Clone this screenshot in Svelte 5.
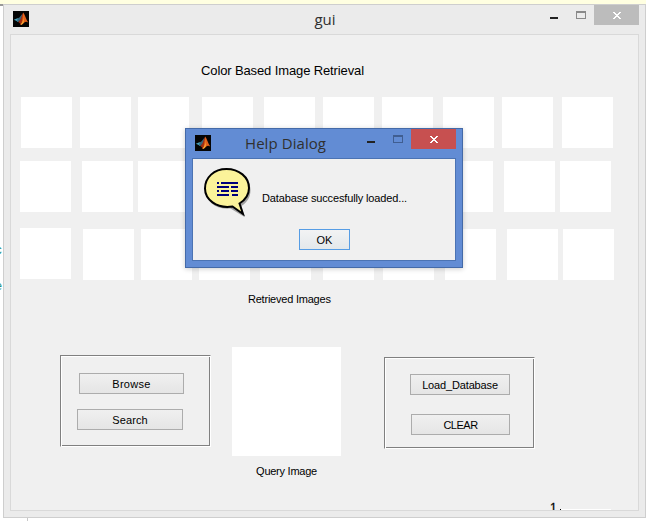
<script>
  const toGaps = (xs, start) => xs.map((x, i) => x - (i ? xs[i - 1] + 51 : start));
  const rows = [
    { xs: [21, 80, 138, 202, 264, 323, 382, 443, 502, 562] },
    { xs: [20, 82, 138, 199, 260, 321, 382, 442, 504, 560] },
    { xs: [20, 83, 141, 199, 260, 323, 383, 445, 507, 563] }
  ].map((r) => toGaps(r.xs, 11));
</script>

{#snippet logo()}
  <svg class="logo" width="16" height="16" viewBox="0 0 16 16">
    <rect width="16" height="16" fill="#050505" />
    <path d="M.8 8.800 4.500 7.300l2.700.7L5 11 3.200 9.800z" fill="#4aa3bd" />
    <path d="M5 7.200c2-.6 3-2.700 4.500-4.600L8.600 8 5.200 11 4 9.200z" fill="#35667c" />
    <path d="M5.200 11C8 9.500 8.400 5 10.200 1.600L9.800 9 7.500 13.800C7 12.400 6.400 11.500 5.200 11z" fill="#a32d12" />
    <path d="M10.200 1.400c1.800 2.400 2.600 6.400 5 10.200-1.600-1.200-2.800-1.200-4.200.2-1.200 1.300-2.200 2-3.400 2.200C9.600 10.600 9.200 6 10.200 1.400z" fill="#e2611c" />
    <path d="M10.200 1.400c.9 3.200 1.100 5.800-.2 8.400L7.400 14c1.400-.1 2.600-1.300 3.200-2.200.5-3.200.9-6.800-.4-10.400z" fill="#f9a634" />
  </svg>
{/snippet}

{#snippet controls()}
  <div class="controls">
    <svg width="60" height="20" viewBox="0 0 60 20" shape-rendering="crispEdges">
      <rect x="16" y="12" width="8" height="2" fill="#222" />
      <path class="max" d="M42 6h10v8H42zM43 8h8v5h-8z" fill-rule="evenodd" />
    </svg>
    <div class="close">
      <svg width="8" height="7" viewBox="0 0 8 7" shape-rendering="crispEdges" fill="#fff">
        <path d="M0 0h2v1h1v1h2V1h1V0h2v1H7v1H6v1H5v1h1v1h1v1h1v1H6V6H5V5H3v1H2v1H0V6h1V5h1V4h1V3H2V2H1V1H0z" />
      </svg>
    </div>
  </div>
{/snippet}

<div class="desktop">
  <div class="strip"></div>
  <div class="rule"></div>
  <span class="code c1">c</span>
  <span class="code c2">e</span>
  <div class="tick"></div>

  <main class="window">
    <header class="titlebar">
      {@render logo()}
      <span class="caption">gui</span>
      {@render controls()}
    </header>
    <section class="figure">
      <h1>Color Based Image Retrieval</h1>
      <div class="tiles">
        {#each rows as gaps, r}
          <div class="row">
            {#each gaps as gap, i}
              <div class="tile" class:raised={r === 2 && i === 0} style="margin-left: {gap}px"></div>
            {/each}
          </div>
        {/each}
      </div>
      <p class="retrieved">Retrieved Images</p>
      <div class="lower">
        <div class="panel actions">
          <button class="browse">Browse</button>
          <button class="search">Search</button>
        </div>
        <div class="query">
          <div class="preview"></div>
          <p>Query Image</p>
        </div>
        <div class="panel database">
          <button class="load">Load_Database</button>
          <button class="clear">CLEAR</button>
        </div>
      </div>
      <footer><span>1</span><i></i><b></b></footer>
    </section>
  </main>

  <div class="dialog">
    <header class="titlebar">
      {@render logo()}
      <span class="caption">Help Dialog</span>
      {@render controls()}
    </header>
    <div class="body">
      <svg class="bubble" width="50" height="52" viewBox="0 0 50 52">
        <path d="M24 4C37 4 47.500 12 47.500 23c0 8-4 12.500-9 16l3 11-14-8.500C12 43 3 34 3 24 3 13 12 4 24 4z" fill="#777" opacity=".65" />
        <path d="M23.500 2C36 2 46 10 46 21c0 7-4 12-9.500 15.500L40 47 29.500 39.500C13 42 2 32 2 21.500 2 10.500 11 2 23.500 2z" fill="#fbf39a" stroke="#000" stroke-width="2" />
        <path d="M14 15h2v2h-2zM18 15h17v2H18zM14 19h12v2H14zM28 19h7v2h-7zM14 23h2v2h-2zM18 23h8v2h-8zM28 23h7v2h-7zM14 27h12v2H14zM29 27h6v2h-6z" fill="#00007c" shape-rendering="crispEdges" />
      </svg>
      <div class="message">
        <p>Database succesfully loaded...</p>
        <button class="ok">OK</button>
      </div>
    </div>
  </div>
</div>

<style>
  .desktop { position: relative; width: 648px; height: 521px; overflow: hidden; background: #fff; font-family: "Liberation Sans", Arial, sans-serif; font-size: 11px; color: #000; }
  .desktop * { box-sizing: border-box; }
  p, h1 { margin: 0; font-weight: 400; white-space: nowrap; }
  .strip { width: 646px; height: 4px; background: #ffffe1; }
  .rule { position: absolute; left: 0; top: 4px; width: 3px; height: 2px; background: #999; }
  .code { position: absolute; left: -5px; font: 12px/12px "Liberation Mono", monospace; color: #168f89; }
  .c1 { top: 245px; }
  .c2 { top: 281px; }
  .tick { position: absolute; left: 27px; top: 518px; width: 1px; height: 3px; background: #c8c8c8; }
  .window { position: relative; display: flex; flex-direction: column; width: 643px; height: 514px; margin-left: 3px; padding: 0 6px 6px; border: 1px solid #cecece; background: #ebebeb; }
  .titlebar { display: flex; align-items: flex-start; flex: none; height: 29px; font-family: "Open Sans", "Noto Sans", sans-serif; color: #303030; }
  .logo { flex: none; margin: 6px 0 0 3px; }
  .caption { flex: 1; text-align: center; font-size: 15px; line-height: 20px; white-space: nowrap; }
  .controls { display: flex; flex: none; }
  .max { fill: #8a8a8a; }
  .close { display: flex; justify-content: center; width: 45px; height: 20px; padding: 7px 0 0 1px; background: #bcbcbc; }
  .window .caption { padding: 4px 0 0 87px; }
  .figure { display: flex; flex-direction: column; flex: 1; min-height: 0; overflow: hidden; border: 1px solid #d9d9d9; background: #f0f0f0; }
  h1 { flex: none; height: 62px; padding: 27px 0 0 190px; font-size: 13px; line-height: 17px; letter-spacing: -.12px; }
  .tiles { display: flex; flex-direction: column; flex: none; height: 183px; }
  .row { display: flex; flex: none; height: 51px; margin-bottom: 13px; }
  .row:nth-child(2) { margin-bottom: 17px; }
  .tile { flex: none; width: 51px; height: 51px; background: #fff; }
  .raised { margin-top: -1px; }
  .retrieved { flex: none; height: 67px; padding: 13px 0 0 237px; line-height: 13px; letter-spacing: -.22px; }
  .lower { display: flex; align-items: flex-start; flex: none; height: 154px; }
  .panel { display: flex; flex-direction: column; width: 151px; height: 92px; border: 1px solid #808080; border-right-color: #fff; border-bottom-color: #fff; box-shadow: inset 1px 1px #fff, inset -1px -1px #808080; }
  .actions { margin: 8px 0 0 49px; padding: 17px 0 0 18px; }
  .database { margin: 10px 0 0 43px; padding: 16px 0 0 25px; }
  button { display: block; flex: none; height: 21px; padding: 1px 0 0; border: 1px solid #acacac; border-radius: 0; background: linear-gradient(#f0f0f0, #e5e5e5); font: 11px/18px "Liberation Sans", Arial, sans-serif; color: #000; text-align: center; }
  .browse { width: 105px; letter-spacing: .3px; }
  .search { width: 106px; margin: 15px 0 0 -2px; letter-spacing: .1px; }
  .load { width: 100px; letter-spacing: -.15px; }
  .clear { width: 99px; margin: 19px 0 0 1px; letter-spacing: -.5px; }
  .query { width: 109px; margin-left: 21px; }
  .query p { padding-top: 9px; text-align: center; line-height: 13px; letter-spacing: -.25px; }
  .preview { width: 109px; height: 109px; background: #fff; }
  footer { display: flex; flex: none; height: 9px; overflow: hidden; padding-left: 538px; font-size: 12px; line-height: 12px; }
  footer span { width: 11px; padding: 1px 0 0 1px; -webkit-text-stroke: .3px #000; }
  footer i { width: 1px; height: 1px; margin-top: 8px; background: #000; }
  footer b { width: 50px; height: 1px; margin-top: 8px; background: #fff; }
  .dialog { position: absolute; left: 185px; top: 128px; display: flex; flex-direction: column; width: 278px; height: 140px; padding: 0 6px 6px; border: 1px solid #446aa8; background: #628cd4; box-shadow: 0 1px 5px rgba(0, 0, 0, .2); }
  .dialog .caption { padding: 4px 0 0 34px; text-align: left; letter-spacing: .07px; }
  .dialog .max { fill: #405e91; }
  .dialog .close { background: #c75050; }
  .body { display: flex; flex: 1; border: 1px solid #4b73b3; background: #f0f0f0; }
  .bubble { flex: none; margin: 8px 0 0 10px; }
  .message { display: flex; flex-direction: column; padding: 33px 0 0 9px; line-height: 13px; }
  .message p { height: 37px; letter-spacing: -.14px; }
  .ok { width: 51px; margin-left: 37px; border-color: #569de5; background: linear-gradient(#f2f3f4, #e3e8eb); }
</style>
